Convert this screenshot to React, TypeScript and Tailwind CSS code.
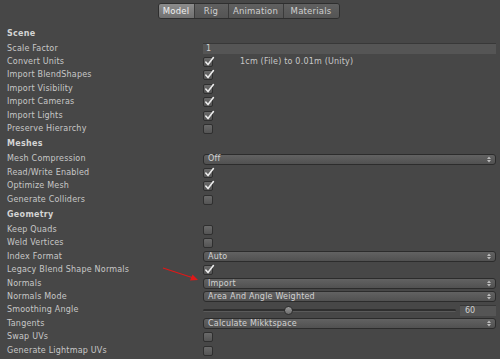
import React from "react";

const font = { fontFamily: '"DejaVu Sans", Verdana, sans-serif' };

function Check({ on }: { on?: boolean }) {
  return (
    <div className="relative w-[10px] h-[10px] rounded-[2px] border border-[#2f2f2f] bg-gradient-to-b from-[#6a6a6a] to-[#545454]">
      {on && (
        <svg
          className="absolute left-[0px] top-[-2px]"
          width="11"
          height="11"
          viewBox="0 0 11 11"
          fill="none"
        >
          <path
            d="M1.8 6 L4 8.6 L9.4 1.6"
            stroke="#ececec"
            strokeWidth="1.6"
            strokeLinecap="round"
            strokeLinejoin="round"
          />
        </svg>
      )}
    </div>
  );
}

function Dropdown({ value }: { value: string }) {
  return (
    <div className="flex items-center justify-between h-[11px] rounded-[3px] border border-[#2c2c2c] bg-gradient-to-b from-[#626262] to-[#515151] pl-[4px] pr-[4px] text-[8px] leading-none text-[#d2d2d2] tracking-[0.2px]">
      <span>{value}</span>
      <svg width="4" height="7" viewBox="0 0 4 7">
        <path d="M0 3 L2 0.5 L4 3 Z" fill="#bdbdbd" />
        <path d="M0 4 L2 6.5 L4 4 Z" fill="#bdbdbd" />
      </svg>
    </div>
  );
}

function Row({ label, children }: { label: string; children?: React.ReactNode }) {
  return (
    <div className="flex items-center h-[13.4px]">
      <div className="w-[196px] shrink-0 text-[8px] leading-none text-[#c8c8c8] tracking-[0.2px]">
        {label}
      </div>
      <div className="flex-1">{children}</div>
    </div>
  );
}

function Header({ title }: { title: string }) {
  return (
    <div className="flex items-center h-[17px] text-[8px] font-bold leading-none text-[#d4d4d4] tracking-[0.3px]">
      {title}
    </div>
  );
}

const tabs = [
  { name: "Model", w: "w-[35px]", active: true },
  { name: "Rig", w: "w-[34px]" },
  { name: "Animation", w: "w-[55px]" },
  { name: "Materials", w: "w-[56px]" },
];

export default function App() {
  return (
    <div
      className="relative w-[500px] h-[359px] overflow-hidden bg-[#474747] pl-[7px] pr-[4px]"
      style={font}
    >
      {/* tab strip */}
      <div className="flex justify-center pt-[3px]">
        <div className="flex h-[16px] rounded-[3px] border border-[#2e2e2e] overflow-hidden ml-[-6px]">
          {tabs.map((t, i) => (
            <div
              key={t.name}
              className={`${t.w} flex items-center justify-center text-[8.5px] leading-none tracking-[0.2px] ${
                i > 0 ? "border-l border-[#3a3a3a]" : ""
              } ${
                t.active
                  ? "bg-gradient-to-b from-[#8c8c8c] to-[#707070] text-[#f0f0f0]"
                  : "bg-gradient-to-b from-[#606060] to-[#545454] text-[#cfcfcf]"
              }`}
            >
              {t.name}
            </div>
          ))}
        </div>
      </div>

      <div className="mt-[6px]">
        <Header title="Scene" />
        <Row label="Scale Factor">
          <div className="h-[11px] bg-[#555555] border-t border-[#383838] pl-[3px] text-[8px] leading-[10px] text-[#d0d0d0]">
            1
          </div>
        </Row>
        <Row label="Convert Units">
          <div className="flex items-center">
            <Check on />
            <span className="ml-[27px] text-[8px] leading-none text-[#c8c8c8] tracking-[0.2px]">
              1cm (File) to 0.01m (Unity)
            </span>
          </div>
        </Row>
        <Row label="Import BlendShapes">
          <Check on />
        </Row>
        <Row label="Import Visibility">
          <Check on />
        </Row>
        <Row label="Import Cameras">
          <Check on />
        </Row>
        <Row label="Import Lights">
          <Check on />
        </Row>
        <Row label="Preserve Hierarchy">
          <Check />
        </Row>

        <Header title="Meshes" />
        <Row label="Mesh Compression">
          <Dropdown value="Off" />
        </Row>
        <Row label="Read/Write Enabled">
          <Check on />
        </Row>
        <Row label="Optimize Mesh">
          <Check on />
        </Row>
        <Row label="Generate Colliders">
          <Check />
        </Row>

        <Header title="Geometry" />
        <Row label="Keep Quads">
          <Check />
        </Row>
        <Row label="Weld Vertices">
          <Check />
        </Row>
        <Row label="Index Format">
          <Dropdown value="Auto" />
        </Row>
        <Row label="Legacy Blend Shape Normals">
          <Check on />
        </Row>
        <Row label="Normals">
          <Dropdown value="Import" />
        </Row>
        <Row label="Normals Mode">
          <Dropdown value="Area And Angle Weighted" />
        </Row>
        <Row label="Smoothing Angle">
          <div className="flex items-center">
            <div className="relative w-[253px] h-[9px] flex items-center">
              <div className="w-full h-[3px] rounded-full bg-[#2f2f2f] border-b border-[#5a5a5a]" />
              <div className="absolute left-[81px] top-[0px] w-[9px] h-[9px] rounded-full border border-[#2e2e2e] bg-gradient-to-b from-[#9a9a9a] to-[#6c6c6c]" />
            </div>
            <div className="ml-[4px] flex-1 h-[11px] bg-[#555555] border-t border-[#383838] pl-[5px] text-[8px] leading-[10px] text-[#d0d0d0]">
              60
            </div>
          </div>
        </Row>
        <Row label="Tangents">
          <Dropdown value="Calculate Mikktspace" />
        </Row>
        <Row label="Swap UVs">
          <Check />
        </Row>
        <Row label="Generate Lightmap UVs">
          <Check />
        </Row>
      </div>

      {/* red annotation arrow */}
      <svg
        className="absolute left-[160px] top-[264px]"
        width="42"
        height="20"
        viewBox="0 0 42 20"
      >
        <line x1="3" y1="4" x2="32" y2="13.5" stroke="#e01818" strokeWidth="1.1" />
        <path d="M38 16 L30 16.5 L32.5 10.5 Z" fill="#e01818" />
      </svg>
    </div>
  );
}
